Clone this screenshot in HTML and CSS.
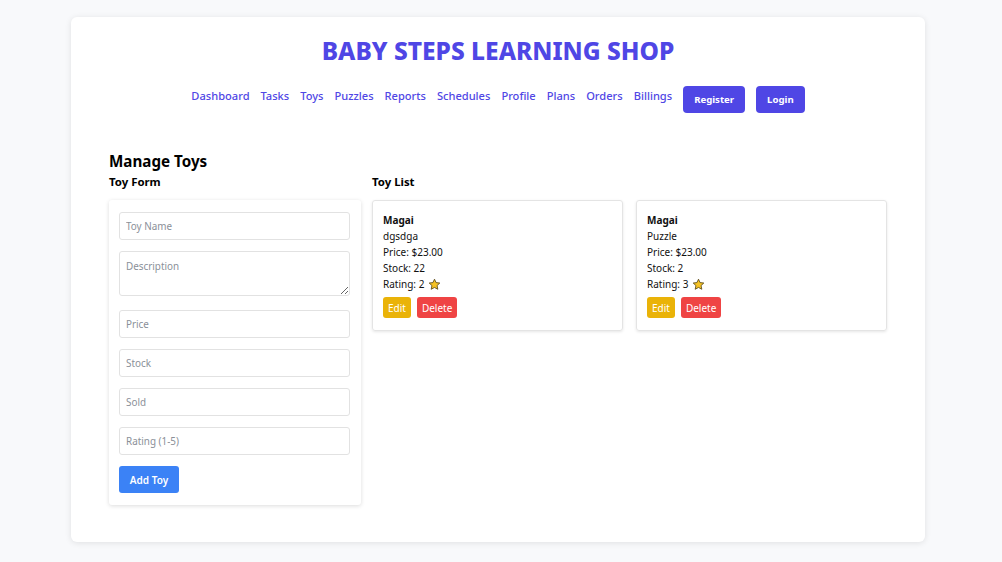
FILE: index.html
```html
<!DOCTYPE html>
<html lang="en">
<head>
<meta charset="utf-8">
<title>Baby Steps Learning Shop</title>
<link rel="stylesheet" href="styles.css">
</head>
<body>
<div class="shell">
  <h1 class="title">BABY STEPS LEARNING SHOP</h1>
  <nav class="nav">
    <a class="link" href="#">Dashboard</a>
    <a class="link" href="#">Tasks</a>
    <a class="link" href="#">Toys</a>
    <a class="link" href="#">Puzzles</a>
    <a class="link" href="#">Reports</a>
    <a class="link" href="#">Schedules</a>
    <a class="link" href="#">Profile</a>
    <a class="link" href="#">Plans</a>
    <a class="link" href="#">Orders</a>
    <a class="link" href="#">Billings</a>
    <button class="nav-btn">Register</button>
    <button class="nav-btn">Login</button>
  </nav>
  <section class="manage">
    <h2 class="manage-title">Manage Toys</h2>
    <div class="cols">
      <div class="form-col">
        <h3 class="sub">Toy Form</h3>
        <form class="form-card">
          <input class="field" placeholder="Toy Name">
          <textarea class="field area" placeholder="Description"></textarea>
          <input class="field gap-lg" placeholder="Price">
          <input class="field" placeholder="Stock">
          <input class="field" placeholder="Sold">
          <input class="field" placeholder="Rating (1-5)">
          <button type="button" class="add-btn">Add Toy</button>
        </form>
      </div>
      <div class="list-col">
        <h3 class="sub">Toy List</h3>
        <div class="cards">
          <div class="card">
            <div class="name">Magai</div>
            <div>dgsdga</div>
            <div>Price: $23.00</div>
            <div>Stock: 22</div>
            <div class="rating">Rating: 2 <svg class="star" viewBox="0 0 24 24" width="13" height="13"><path d="M12 2.2l2.9 6.3 6.9.8-5.1 4.7 1.4 6.8L12 17.4l-6.1 3.4 1.4-6.8-5.1-4.7 6.9-.8z" fill="#f6c324" stroke="#5a4a1a" stroke-width="1.6" stroke-linejoin="round"/></svg></div>
            <div class="actions"><button class="edit">Edit</button><button class="del">Delete</button></div>
          </div>
          <div class="card">
            <div class="name">Magai</div>
            <div>Puzzle</div>
            <div>Price: $23.00</div>
            <div>Stock: 2</div>
            <div class="rating">Rating: 3 <svg class="star" viewBox="0 0 24 24" width="13" height="13"><path d="M12 2.2l2.9 6.3 6.9.8-5.1 4.7 1.4 6.8L12 17.4l-6.1 3.4 1.4-6.8-5.1-4.7 6.9-.8z" fill="#f6c324" stroke="#5a4a1a" stroke-width="1.6" stroke-linejoin="round"/></svg></div>
            <div class="actions"><button class="edit">Edit</button><button class="del">Delete</button></div>
          </div>
        </div>
      </div>
    </div>
  </section>
</div>
</body>
</html>
```

FILE: styles.css
```css
* { box-sizing: border-box; }
html, body { margin: 0; padding: 0; }
body {
  background: #f8f9fb;
  font-family: "Noto Sans", "Open Sans", sans-serif;
  color: #111;
  padding: 17px 77px 20px 71px;
}
.shell {
  width: 854px;
  height: 525px;
  background: #fff;
  border-radius: 6px;
  box-shadow: 0 1px 6px rgba(0,0,0,0.10);
  padding: 18px 38px 0 38px;
}
.title {
  margin: 0;
  text-align: center;
  font-size: 24.5px;
  line-height: 32px;
  font-weight: 800;
  color: #4f46e5;
}
.nav {
  margin-top: 19px;
  display: flex;
  justify-content: center;
  gap: 11px;
  height: 27px;
}
.link {
  font-size: 11.1px;
  line-height: 20px;
  color: #4f46e5;
  text-decoration: none;
  font-weight: 500;
}
.nav-btn {
  border: none;
  background: #4f46e5;
  color: #fff;
  font-family: inherit;
  font-size: 9.6px;
  font-weight: 700;
  border-radius: 4px;
  padding: 0 11px;
  height: 27px;
}
.manage { margin-top: 36px; }
.manage-title {
  margin: 0;
  font-size: 15.2px;
  line-height: 24px;
  font-weight: 700;
  color: #000;
}
.cols { display: flex; gap: 11px; }
.form-col { width: 252px; }
.list-col { flex: 1; }
.sub {
  margin: 0 0 10px 0;
  font-size: 11.4px;
  line-height: 17px;
  font-weight: 700;
  color: #000;
}
.form-card {
  background: #fff;
  box-shadow: 0 1px 4px rgba(0,0,0,0.14);
  border-radius: 3px;
  padding: 12px 11px 12px 10px;
  display: flex;
  flex-direction: column;
  gap: 11px;
  align-items: flex-start;
}
.field {
  width: 231px;
  height: 28px;
  border: 1px solid #e2e2e2;
  border-radius: 3px;
  padding: 0 6px;
  font-family: inherit;
  font-size: 9.9px;
  color: #333;
  outline: none;
}
.field::placeholder { color: #8a8f98; }
.area {
  height: 45px;
  padding-top: 7px;
  resize: vertical;
}
.gap-lg { margin-top: 3px; }
.add-btn {
  border: none;
  background: #3b82f6;
  color: #fff;
  font-family: inherit;
  font-size: 10px;
  font-weight: 600;
  border-radius: 3px;
  width: 60px;
  height: 27px;
}
.cards { display: flex; gap: 13px; margin-top: 3px; }
.card {
  width: 251px;
  border: 1px solid #e4e4e4;
  border-radius: 3px;
  box-shadow: 0 1px 3px rgba(0,0,0,0.10);
  padding: 11px 10px 12px 10px;
  font-size: 10px;
  line-height: 16px;
  color: #111;
}
.name { font-weight: 700; }
.rating { display: flex; align-items: center; gap: 4px; }
.actions { display: flex; gap: 6px; margin-top: 5px; }
.actions button {
  border: none;
  color: #fff;
  font-family: inherit;
  font-size: 10px;
  border-radius: 3px;
  height: 21px;
  padding: 0 5px;
}
.edit { background: #eab308; }
.del { background: #ef4444; }
```
